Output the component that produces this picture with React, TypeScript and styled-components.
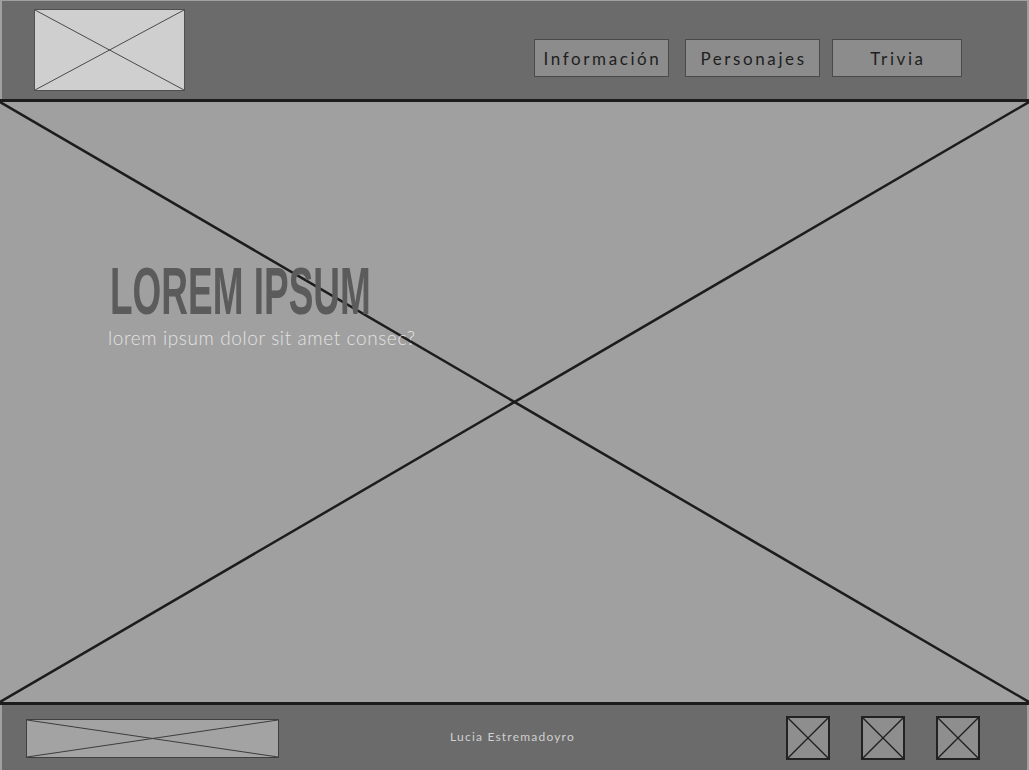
import React from 'react';
import styled, { createGlobalStyle } from 'styled-components';

const GlobalStyle = createGlobalStyle`
  html, body {
    margin: 0;
    padding: 0;
    background: #a0a0a0;
    overflow: hidden;
  }
  body {
    font-family: 'Lato', 'Liberation Sans', sans-serif;
  }
`;

const navItems = ['Información', 'Personajes', 'Trivia'];

function Cross({ stroke, width }: { stroke: string; width: number }) {
  return (
    <CrossSvg viewBox="0 0 100 100" preserveAspectRatio="none">
      <line x1="0" y1="0" x2="100" y2="100" stroke={stroke} strokeWidth={width} vectorEffect="non-scaling-stroke" />
      <line x1="100" y1="0" x2="0" y2="100" stroke={stroke} strokeWidth={width} vectorEffect="non-scaling-stroke" />
    </CrossSvg>
  );
}

function App() {
  return (
    <Page>
      <GlobalStyle />
      <Header>
        <Logo>
          <Cross stroke="#4a4a4a" width={1} />
        </Logo>
        <Nav>
          {navItems.map((item) => (
            <NavButton key={item} $wide={item !== 'Trivia'}>
              {item}
            </NavButton>
          ))}
        </Nav>
      </Header>

      <Hero>
        <Cross stroke="#1c1c1c" width={2.5} />
        <HeroText>
          <Title>LOREM IPSUM</Title>
          <Subtitle>lorem ipsum dolor sit amet consec?</Subtitle>
        </HeroText>
      </Hero>

      <Footer>
        <Banner>
          <Cross stroke="#3c3c3c" width={1} />
        </Banner>
        <Credit>Lucia Estremadoyro</Credit>
        <Socials>
          {[0, 1, 2].map((i) => (
            <Social key={i}>
              <Cross stroke="#1e1e1e" width={1.3} />
            </Social>
          ))}
        </Socials>
      </Footer>
    </Page>
  );
}

export default App;

const Page = styled.div`
  width: 1029px;
  height: 770px;
  display: flex;
  flex-direction: column;
  padding-top: 1px;
  box-sizing: border-box;
`;

const CrossSvg = styled.svg`
  position: absolute;
  inset: 0;
  width: 100%;
  height: 100%;
  display: block;
`;

const Header = styled.header`
  height: 98px;
  margin: 0 2px;
  background: #6b6b6b;
  display: flex;
  align-items: flex-start;
  justify-content: space-between;
  padding: 8px 65px 0 32px;
  box-sizing: border-box;
`;

const Logo = styled.div`
  position: relative;
  width: 151px;
  height: 82px;
  background: #cfcfcf;
  border: 1px solid #505050;
  box-sizing: border-box;
`;

const Nav = styled.nav`
  display: flex;
  gap: 12px;
  margin-top: 30px;
`;

const NavButton = styled.div<{ $wide: boolean }>`
  width: ${(p) => (p.$wide ? '135px' : '130px')};
  height: 38px;
  background: #8c8c8c;
  border: 1px solid #4a4a4a;
  box-sizing: border-box;
  display: flex;
  align-items: center;
  justify-content: center;
  padding-left: 2px;
  font-family: 'Lato', 'Liberation Sans', sans-serif;
  font-size: 17px;
  letter-spacing: 2.6px;
  color: #1e1e1e;

  &:first-child {
    margin-right: 4px;
  }
`;

const Hero = styled.main`
  position: relative;
  flex: 1;
  background: #a0a0a0;
  border-top: 3px solid #1c1c1c;
  border-bottom: 3px solid #1c1c1c;
  overflow: hidden;
`;

const HeroText = styled.div`
  position: relative;
  padding: 164px 0 0 108px;
  display: flex;
  flex-direction: column;
  align-items: flex-start;
`;

const Title = styled.h1`
  margin: 0 0 0 2px;
  font-family: 'Liberation Sans', sans-serif;
  font-weight: 700;
  font-size: 66px;
  line-height: 50px;
  color: #5b5b5b;
  transform: scaleX(0.56);
  transform-origin: left center;
  white-space: nowrap;
`;

const Subtitle = styled.p`
  margin: 11px 0 0;
  font-family: 'Lato', sans-serif;
  font-weight: 300;
  font-size: 19px;
  line-height: 22px;
  letter-spacing: 0.6px;
  color: #e2e2e2;
`;

const Footer = styled.footer`
  height: 65px;
  margin: 0 2px;
  background: #6b6b6b;
  display: grid;
  grid-template-columns: 1fr auto 1fr;
  align-items: center;
  padding: 0 24px;
  box-sizing: border-box;
`;

const Banner = styled.div`
  position: relative;
  width: 253px;
  height: 39px;
  background: #a3a3a3;
  border: 1px solid #404040;
  box-sizing: border-box;
  margin-top: 1px;
`;

const Credit = styled.div`
  font-family: 'Lato', sans-serif;
  font-size: 12px;
  letter-spacing: 1.2px;
  color: #d0d0d0;
  margin: -2px 4px 0 0;
`;

const Socials = styled.div`
  display: flex;
  justify-content: flex-end;
  gap: 31px;
  padding-right: 23px;
`;

const Social = styled.div`
  position: relative;
  width: 44px;
  height: 44px;
  background: #8e8e8e;
  border: 2px solid #222;
  box-sizing: border-box;
`;
